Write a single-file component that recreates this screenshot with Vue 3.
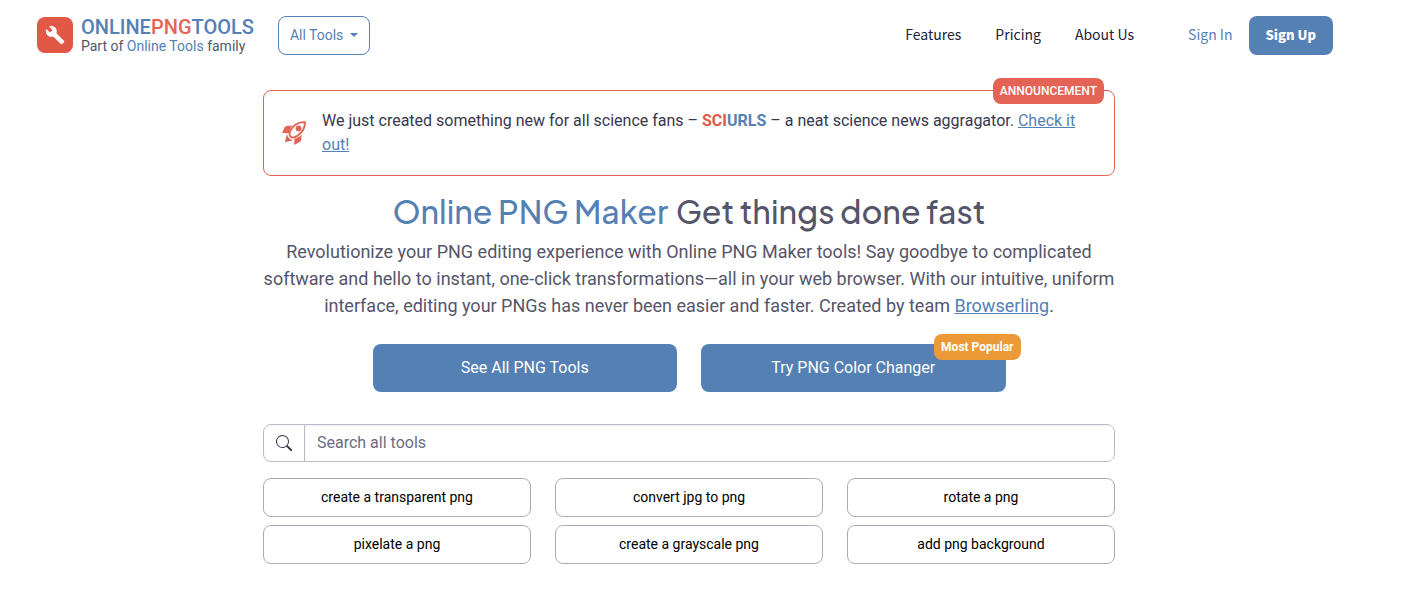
<template>
  <div class="page">
    <header class="header">
      <a href="#" class="brand" aria-label="Online PNG Tools">
        <svg class="brand-icon" viewBox="0 0 36 36" aria-hidden="true">
          <rect width="36" height="36" rx="8" fill="#e15847" />
          <path
            transform="translate(8 8) scale(0.84)"
            fill="#fff"
            d="M22.7 19l-9.1-9.1c.9-2.3.4-5-1.5-6.9-2-2-5-2.4-7.4-1.3L9 6 6 9 1.6 4.7C.4 7.1.9 10.1 2.9 12.1c1.9 1.9 4.6 2.4 6.9 1.5l9.1 9.1c.4.4 1 .4 1.4 0l2.3-2.3c.5-.4.5-1.1.1-1.4z"
          />
        </svg>
      </a>
      <div class="brand-text">
        <a href="#" class="brand-name">ONLINE<span class="red">PNG</span>TOOLS</a>
        <div class="brand-sub">Part of <a href="#">Online Tools</a> family</div>
      </div>
      <button type="button" class="all-tools">All Tools <span class="caret"></span></button>

      <nav class="nav">
        <a v-for="link in links" :key="link" href="#">{{ link }}</a>
      </nav>
      <a href="#" class="sign-in">Sign In</a>
      <button type="button" class="sign-up">Sign Up</button>
    </header>

    <main class="main">
      <section class="announcement">
        <span class="badge badge-red">ANNOUNCEMENT</span>
        <svg class="rocket" viewBox="0 0 24 24" aria-hidden="true">
          <path
            fill="none"
            stroke="#e36454"
            stroke-width="1.9"
            d="M22.900 1.100C18.500 1 14.400 2.400 11.500 5.400C9.100 7.900 7.500 10.400 7.500 12.900C7.500 15.400 9.500 17 11.800 16.500C14.400 15.900 17.100 14 19.300 11.400C21.900 8.500 23 5 22.900 1.100Z"
          />
          <circle cx="16.600" cy="7.400" r="2.900" fill="#e36454" />
          <path
            fill="#e36454"
            d="M10.200 4.400L4.700 4.900C3.800 5 3.300 5.400 2.800 6.100L0 11.900L7 12C7.200 9.100 8.400 6.700 10.200 4.400ZM19.700 13.700C17.600 15.800 15.300 17.200 12.400 17.500L12.200 24L18.100 20.700C18.800 20.300 19.100 19.800 19.200 19ZM4.900 12.900L2.900 21.300L11.200 19.300C8 18.500 5.700 16.200 4.900 12.900Z"
          />
        </svg>
        <p>
          We just created something new for all science fans –
          <a href="#" class="sciurls"><span>SCI</span>URLS</a> – a neat science news aggragator.
          <a href="#" class="link">Check it out!</a>
        </p>
      </section>

      <h1><span>Online PNG Maker</span> Get things done fast</h1>
      <p class="lead">
        Revolutionize your PNG editing experience with Online PNG Maker tools! Say goodbye to complicated software
        and hello to instant, one-click transformations—all in your web browser. With our intuitive, uniform
        interface, editing your PNGs has never been easier and faster. Created by team
        <a href="#" class="link">Browserling</a>.
      </p>

      <div class="actions">
        <button type="button">See All PNG Tools</button>
        <button type="button">
          Try PNG Color Changer
          <span class="badge badge-orange">Most Popular</span>
        </button>
      </div>

      <form class="search" @submit.prevent>
        <label for="search">
          <svg viewBox="0 0 16 16" aria-label="Search">
            <path
              fill="#37374e"
              d="M11.742 10.344a6.500 6.500 0 1 0-1.397 1.398h-.001c.03.04.062.078.098.115l3.850 3.850a1 1 0 0 0 1.415-1.414l-3.850-3.850a1.007 1.007 0 0 0-.115-.1zM12 6.500a5.500 5.500 0 1 1-11 0 5.500 5.500 0 0 1 11 0z"
            />
          </svg>
        </label>
        <input id="search" v-model="query" type="text" placeholder="Search all tools" />
      </form>

      <div class="tools">
        <a v-for="tool in tools" :key="tool" href="#">{{ tool }}</a>
      </div>
    </main>
  </div>
</template>

<script setup>
import { ref } from 'vue'

const query = ref('')

const links = ['Features', 'Pricing', 'About Us']

const tools = [
  'create a transparent png',
  'convert jpg to png',
  'rotate a png',
  'pixelate a png',
  'create a grayscale png',
  'add png background'
]
</script>

<style>
body {
  margin: 0;
  background: #fff;
}
</style>

<style scoped>
* {
  box-sizing: border-box;
}

.page {
  padding-right: 30px;
  font-family: Roboto, sans-serif;
  font-size: 16px;
  line-height: 24px;
  color: #37374e;
}

a {
  color: #5580b4;
  text-decoration: none;
}

button {
  font-family: inherit;
  cursor: pointer;
}

.header {
  display: flex;
  align-items: center;
  height: 70px;
  padding: 0 45px 0 37px;
}

.brand-icon {
  display: block;
  width: 36px;
  height: 36px;
}

.brand-text {
  margin-left: 8px;
}

.brand-name {
  display: block;
  padding-top: 2px;
  font-size: 20px;
  font-weight: 500;
  line-height: 20px;
}

.red {
  color: #e36454;
}

.brand-sub {
  font-size: 14px;
  line-height: 18px;
  color: #55556a;
}

.all-tools {
  display: flex;
  align-items: center;
  height: 39px;
  margin-left: 24px;
  padding: 0 11px;
  border: 1px solid #5580b4;
  border-radius: 8px;
  background: #fff;
  color: #5580b4;
  font-size: 14px;
}

.caret {
  margin-left: 7px;
  border-top: 4px solid #5580b4;
  border-right: 4px solid transparent;
  border-left: 4px solid transparent;
}

.nav {
  display: flex;
  gap: 34px;
  margin-left: auto;
}

.nav a,
.sign-in {
  padding-bottom: 2px;
}

.nav a,
.sign-in,
.sign-up {
  font-family: "Noto Sans CJK SC", sans-serif;
  font-size: 14px;
}

.nav a {
  color: #22223a;
}

.sign-in {
  margin-left: 54px;
}

.sign-up {
  height: 39px;
  margin-left: 16px;
  padding: 0 17px 2px;
  border: 0;
  border-radius: 8px;
  background: #5580b4;
  color: #fff;
  font-size: 13px;
  font-weight: 900;
}

.main {
  max-width: 852px;
  margin: 20px auto 0;
}

.announcement {
  position: relative;
  display: flex;
  align-items: center;
  padding: 18px;
  border: 1px solid #e36454;
  border-radius: 8px;
}

.announcement p {
  margin: 0 0 0 16px;
}

.rocket {
  flex: none;
  width: 24px;
  height: 24px;
}

.sciurls {
  font-weight: 700;
}

.sciurls span {
  color: #e15847;
}

.link {
  text-decoration: underline;
}

.badge {
  position: absolute;
  padding: 0 7px;
  border-radius: 8px;
  color: #fff;
  font-size: 12px;
  line-height: 26px;
}

.badge-red {
  top: -13px;
  right: 10px;
  background: #e36454;
  font-weight: 500;
}

.badge-orange {
  top: -10px;
  right: -15px;
  background: #ec9a37;
  font-weight: 700;
}

h1 {
  margin: 15px 0 7px;
  font-family: "Plus Jakarta Sans", Inter, sans-serif;
  font-size: 32px;
  font-weight: 500;
  line-height: 40px;
  text-align: center;
  color: #55556a;
}

h1 span {
  margin-right: 2px;
  color: #5580b4;
}

.lead {
  margin: 0;
  font-size: 18px;
  line-height: 27px;
  text-align: center;
  color: #55556a;
}

.actions {
  display: grid;
  grid-template-columns: 1fr 1fr;
  gap: 24px;
  max-width: 633px;
  margin: 25px auto 32px;
}

.actions button {
  position: relative;
  height: 48px;
  padding: 0 6px 2px;
  border: 0;
  border-radius: 8px;
  background: #5580b4;
  color: #fff;
  font-size: 16px;
}

.search {
  display: flex;
  height: 38px;
  overflow: hidden;
  border: 1px solid #babac8;
  border-radius: 8px;
}

.search label {
  display: flex;
  align-items: center;
  padding: 0 12px;
  border-right: 1px solid #babac8;
}

.search svg {
  width: 16px;
  height: 16px;
}

.search input {
  flex: 1;
  min-width: 0;
  padding: 0 12px;
  border: 0;
  outline: 0;
  box-shadow: inset 0 1px 2px rgba(0, 0, 0, 0.08);
  font: inherit;
}

.search input::placeholder {
  color: #6c6c80;
  opacity: 1;
}

.tools {
  display: grid;
  grid-template-columns: repeat(3, 1fr);
  gap: 8px 24px;
  margin-top: 16px;
}

.tools a {
  border: 1px solid #aaaabc;
  border-radius: 8px;
  color: #000;
  font-size: 14px;
  line-height: 37px;
  text-align: center;
}
</style>
